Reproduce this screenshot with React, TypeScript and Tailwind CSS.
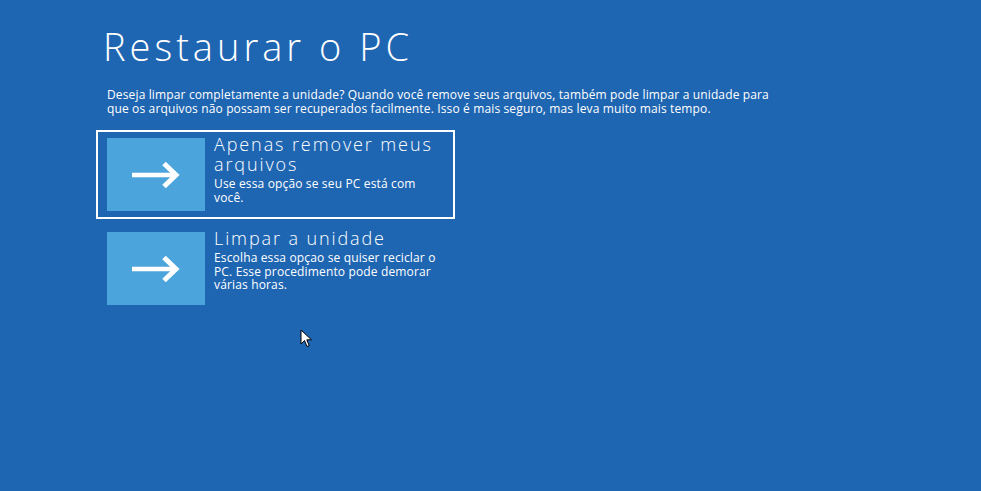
import React from 'react';

// seta branca do ícone de opção
function ArrowIcon() {
  return (
    <svg width="50" height="28" viewBox="0 0 50 28" fill="none">
      <path d="M1 14 H44" stroke="white" strokeWidth="4.5" />
      <path d="M33 2.5 L45 14 L33 25.5" stroke="white" strokeWidth="5" strokeLinejoin="miter" />
    </svg>
  );
}

function Cursor() {
  return (
    <svg width="14" height="20" viewBox="0 0 14 20">
      <path d="M1 1 L1 15 L4.5 11.5 L7 17.5 L9.2 16.6 L6.8 10.8 L11.5 10.8 Z" fill="white" stroke="black" strokeWidth="1" strokeLinejoin="round" />
    </svg>
  );
}

export default function App() {
  const options = [
    {
      title: 'Apenas remover meus arquivos',
      desc: 'Use essa opção se seu PC está com você.',
      selected: true,
    },
    {
      title: 'Limpar a unidade',
      desc: 'Escolha essa opçao se quiser reciclar o PC. Esse procedimento pode demorar várias horas.',
      selected: false,
    },
  ];

  return (
    <div className="relative w-[981px] h-[491px] overflow-hidden bg-[#1f66b2] text-white font-['Open_Sans',sans-serif]">
      <div className="pl-[103px] pt-[22px]">
        <h1 className="text-[38px] font-light leading-[48px] tracking-[4px]">Restaurar o PC</h1>
        <p className="mt-[18px] ml-[4px] w-[680px] text-[12px] leading-[14px] tracking-[0.14px]">
          Deseja limpar completamente a unidade? Quando você remove seus arquivos, também pode limpar a unidade para
          que os arquivos não possam ser recuperados facilmente. Isso é mais seguro, mas leva muito mais tempo.
        </p>

        <div className="mt-[14px] -ml-[7px] flex flex-col gap-[5px]">
          {options.map((opt) => (
            <div
              key={opt.title}
              className={
                opt.selected
                  ? 'flex w-[359px] border-2 border-white pl-[9px] py-[6px]'
                  : 'flex w-[359px] border-2 border-transparent pl-[9px] py-[6px]'
              }
            >
              <div className="w-[98px] h-[73px] shrink-0 bg-[#4ca4dc] flex items-center justify-center">
                <ArrowIcon />
              </div>
              <div className="ml-[9px] w-[232px] -mt-[4px]">
                <div className="text-[18px] font-light leading-[20px] tracking-[1.9px]">{opt.title}</div>
                <div className="mt-[3px] text-[12px] leading-[13.5px] tracking-[0.15px]">{opt.desc}</div>
              </div>
            </div>
          ))}
        </div>
      </div>

      <div className="absolute left-[300px] top-[329px]">
        <Cursor />
      </div>
    </div>
  );
}
